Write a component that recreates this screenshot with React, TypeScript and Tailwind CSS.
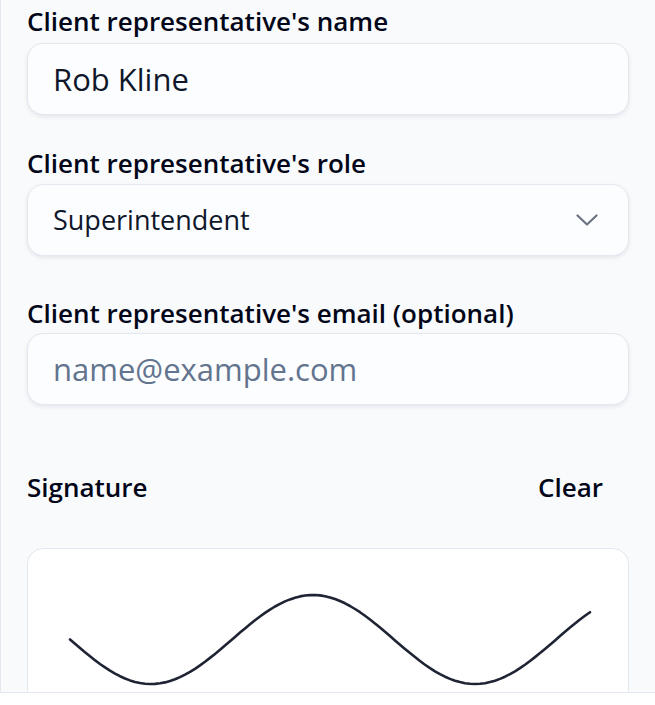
import { useState } from "react";

const fieldClass =
  "block h-[72px] w-full rounded-2xl border border-slate-200 bg-[#fcfdff] px-[25px] text-[31px] text-slate-900 shadow-[0_2px_4px_rgba(15,23,42,0.08)] outline-none placeholder:text-slate-500";

const labelClass = "block text-[26px] font-semibold leading-[32px] text-slate-950";

// signature stroke, sampled from a sine wave
const wave = Array.from({ length: 105 }, (_, i) => {
  const x = 42 + i * 5;
  const y = 90.5 + 44.5 * Math.sin((2 * Math.PI * (x - 42)) / 324);
  return `${i === 0 ? "M" : "L"}${x} ${y.toFixed(1)}`;
}).join(" ");

export default function App() {
  const [name, setName] = useState("Rob Kline");
  const [email, setEmail] = useState("");

  return (
    <div className="flex h-screen flex-col bg-white font-['Open_Sans',sans-serif]">
      <main className="flex-1 overflow-hidden border-l border-slate-200 bg-slate-50 px-[26px] pt-[5px]">
        <div>
          <label className={labelClass}>Client representative's name</label>
          <input
            value={name}
            onChange={(e) => setName(e.target.value)}
            className={`mt-[6px] ${fieldClass}`}
          />
        </div>

        <div className="mt-[32px]">
          <label className={labelClass}>Client representative's role</label>
          <button
            type="button"
            className="mt-[5px] flex h-[72px] w-full items-center justify-between rounded-2xl border border-slate-200 bg-[#fcfdff] pl-[25px] pr-[30px] text-left text-[27px] text-slate-900 shadow-[0_2px_4px_rgba(15,23,42,0.08)]"
          >
            <span>Superintendent</span>
            <svg width="22" height="12" viewBox="0 0 22 12" fill="none">
              <path
                d="M1.5 1.5 L11 10.5 L20.5 1.5"
                stroke="#6b7280"
                strokeWidth="2.2"
                strokeLinecap="round"
                strokeLinejoin="round"
              />
            </svg>
          </button>
        </div>

        <div className="mt-[41px]">
          <label className={labelClass}>
            Client representative's email (optional)
          </label>
          <input
            value={email}
            onChange={(e) => setEmail(e.target.value)}
            placeholder="name@example.com"
            className={`mt-[4px] ${fieldClass}`}
          />
        </div>

        <div className="mt-[66px] flex items-center justify-between">
          <span className={labelClass}>Signature</span>
          <button
            type="button"
            className="mr-[26px] text-[26px] font-semibold leading-[32px] text-slate-950"
          >
            Clear
          </button>
        </div>

        <div className="mt-[45px] h-[260px] rounded-2xl border border-slate-200 bg-white">
          <svg width="100%" height="100%" fill="none">
            <path
              d={wave}
              stroke="#1e2433"
              strokeWidth="2.6"
              strokeLinecap="round"
              strokeLinejoin="round"
            />
          </svg>
        </div>
      </main>
      <footer className="h-[13px] border-t border-slate-200 bg-white" />
    </div>
  );
}
